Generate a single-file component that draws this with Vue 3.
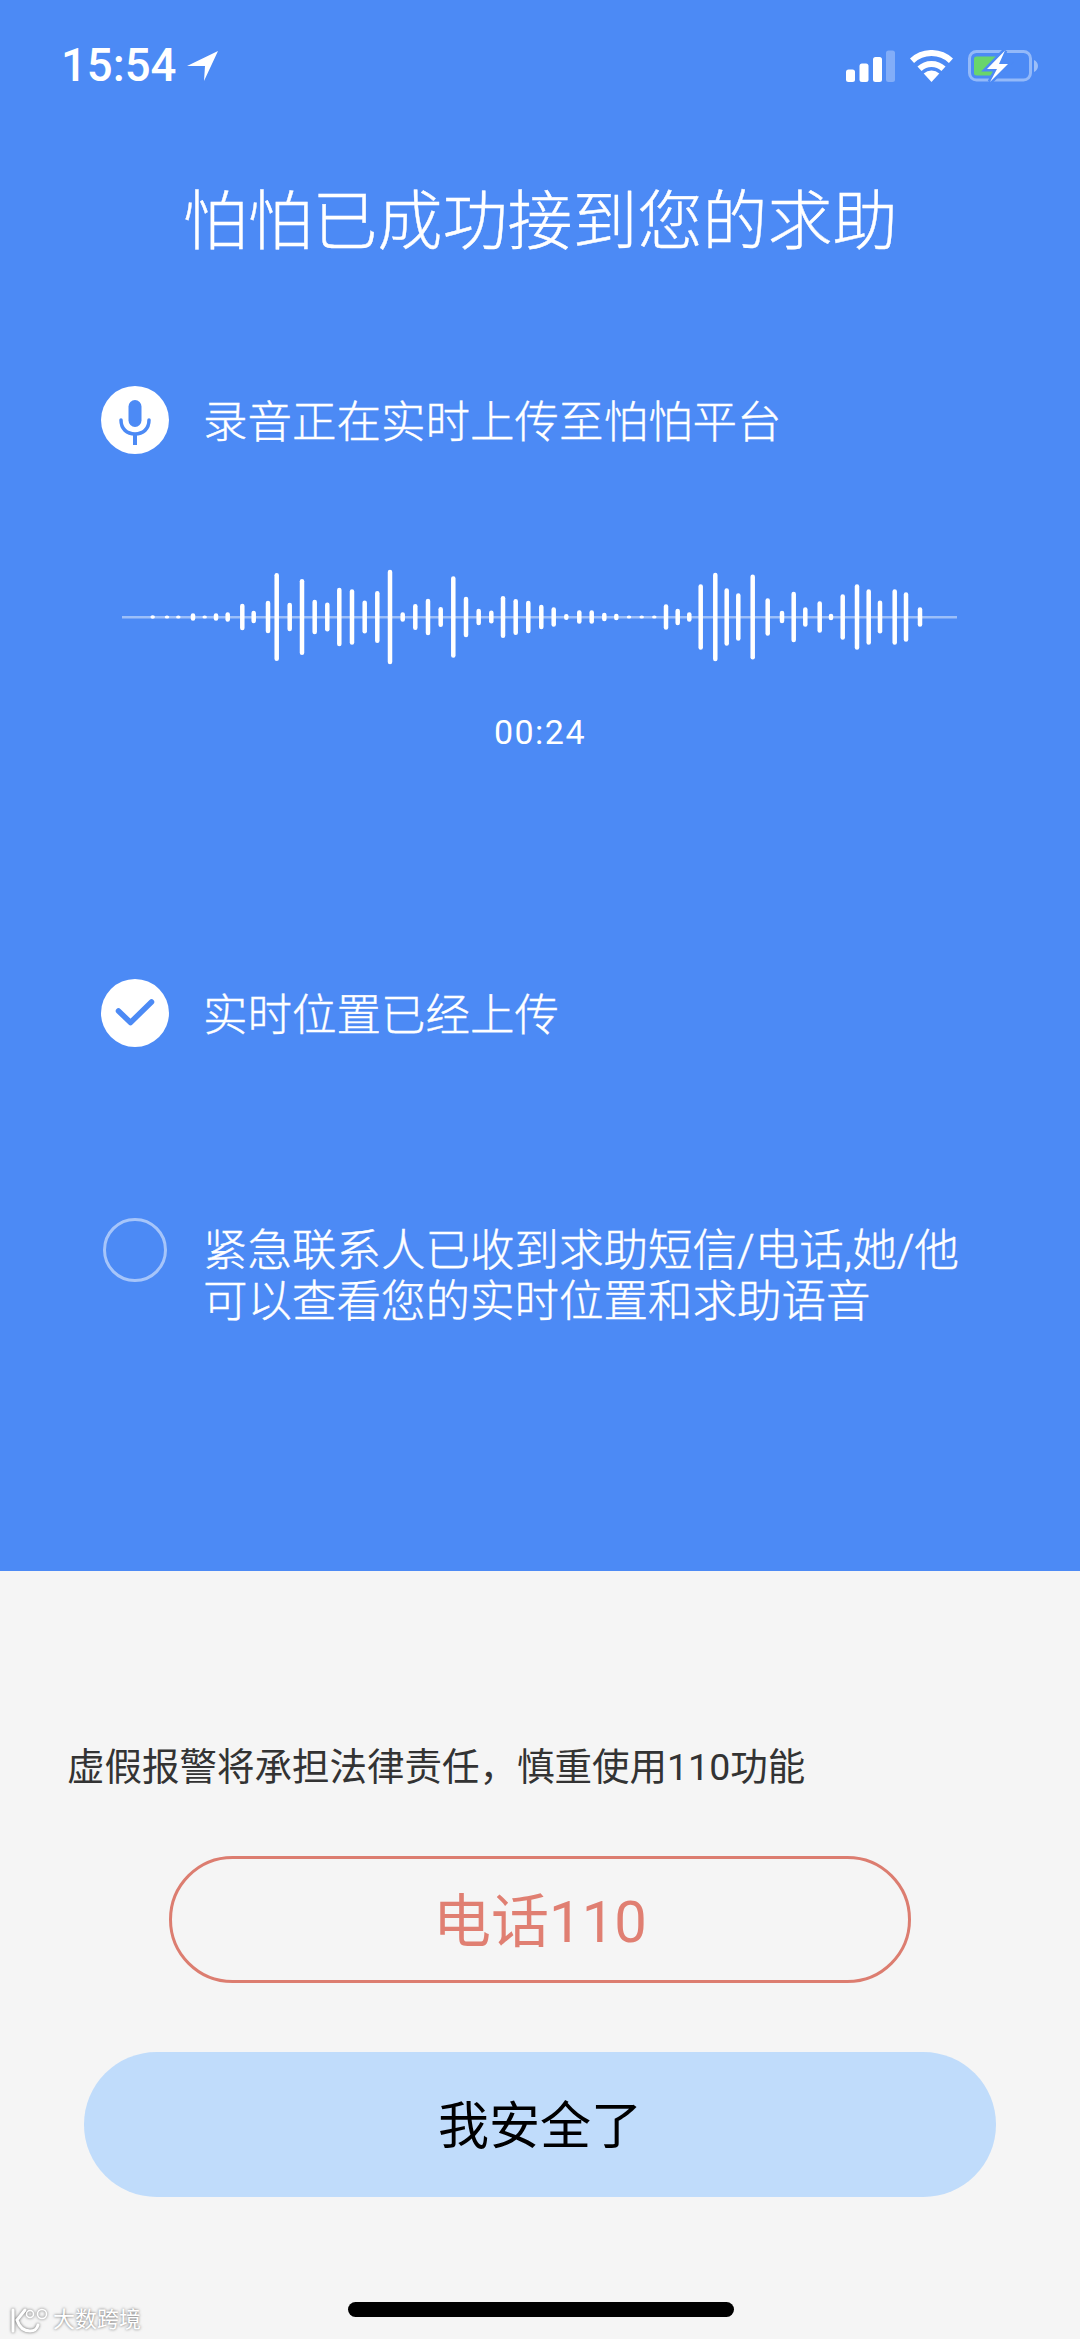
<template>
  <div class="screen">
    <section class="help">
      <div class="status-bar">
        <div class="status-left">
          <span class="time">15:54</span>
          <svg class="arrow" viewBox="0 0 31 31"><path d="M31 0 L17 30 L18 15 L0 15 Z" fill="#fff" /></svg>
        </div>
        <div class="status-right">
          <svg class="signal" viewBox="0 0 49 32">
            <rect x="0" y="19.500" width="9" height="12.500" rx="2.500" fill="#fff" />
            <rect x="13.500" y="13.500" width="9" height="18.500" rx="2.500" fill="#fff" />
            <rect x="27" y="7" width="9" height="25" rx="2.500" fill="#fff" />
            <rect x="40" y="0.500" width="9" height="31.500" rx="2.500" fill="#fff" fill-opacity="0.3" />
          </svg>
          <svg class="wifi" viewBox="0 0 43 32">
            <path d="M2 10.700 A28.500 28.500 0 0 1 41 10.700" fill="none" stroke="#fff" stroke-width="6" />
            <path d="M9.500 18.700 A17.500 17.500 0 0 1 33.500 18.700" fill="none" stroke="#fff" stroke-width="6" />
            <path d="M13.700 23.600 A11.500 11.500 0 0 1 29.300 23.600 L21.500 32 Z" fill="#fff" />
          </svg>
          <svg class="battery" viewBox="0 0 70 32">
            <rect x="1.500" y="1.500" width="61" height="28.500" rx="7" fill="none" stroke="#fff" stroke-opacity="0.4" stroke-width="3" />
            <rect x="6" y="6.500" width="24" height="19" rx="2.500" fill="#69d56b" />
            <path d="M66 10 C68.500 11 70 13.500 70 16 C70 18.500 68.500 21 66 22 Z" fill="#fff" fill-opacity="0.45" />
            <path d="M37 0.500 L19 19 L29 19 L22 32 L40 14 L31 14 Z" fill="#fff" stroke="#4c8af5" stroke-width="5" paint-order="stroke" />
          </svg>
        </div>
      </div>

      <h1 class="title">怕怕已成功接到您的求助</h1>

      <div class="row row-record">
        <span class="badge">
          <svg viewBox="0 0 68 68" class="badge-icon">
            <rect x="27.500" y="14" width="13" height="27" rx="6.500" fill="#4c8af5" />
            <path d="M20 34 C20 43 26 48 34 48 C42 48 48 43 48 34" fill="none" stroke="#4c8af5" stroke-width="3.500" stroke-linecap="round" />
            <rect x="32" y="48" width="4" height="11" fill="#4c8af5" />
          </svg>
        </span>
        <span class="row-text">录音正在实时上传至怕怕平台</span>
      </div>

      <svg class="wave" viewBox="0 0 1080 100">
        <rect x="122" y="49" width="835" height="2.500" fill="#fff" fill-opacity="0.45" />
        <rect
          v-for="bar in bars"
          :key="bar[0]"
          :x="bar[0] - 2.25"
          :y="50 - bar[1] / 2"
          width="4.500"
          :height="bar[1]"
          rx="2.250"
          fill="#fff"
        />
      </svg>

      <div class="timer">00:24</div>

      <div class="row row-location">
        <span class="badge">
          <svg viewBox="0 0 68 68" class="badge-icon">
            <path d="M17.500 32 L29.500 43.500 L50.500 23" fill="none" stroke="#4c8af5" stroke-width="5.500" stroke-linecap="round" stroke-linejoin="round" />
          </svg>
        </span>
        <span class="row-text">实时位置已经上传</span>
      </div>

      <div class="row row-contact">
        <span class="badge-empty"></span>
        <span class="row-text">紧急联系人已收到求助短信/电话,她/他<br />可以查看您的实时位置和求助语音</span>
      </div>
    </section>

    <section class="actions">
      <p class="notice">虚假报警将承担法律责任，慎重使用110功能</p>
      <button class="btn-call">电话110</button>
      <button class="btn-safe">我安全了</button>
      <div class="home-bar"></div>
    </section>

    <div class="watermark">
      <svg class="mark-logo" viewBox="0 0 38 26">
        <path d="M3 3 V24 M15 3 L7 13 C9 19 13 24 20 24 C24 24 27 22 28 18" fill="none" stroke="#fff" stroke-width="3" stroke-linecap="round" />
        <circle cx="20" cy="7" r="3.500" fill="none" stroke="#fff" stroke-width="1.500" />
        <circle cx="32" cy="7" r="4.500" fill="none" stroke="#fff" stroke-width="1.500" />
      </svg>
      <span>大数跨境</span>
    </div>
  </div>
</template>

<script setup>
// x centre and height of each waveform bar
const bars = [
  [152.7, 3.3], [167, 3], [178.3, 3], [193, 7.3], [204.7, 3], [216, 7.7], [227.7, 9.3],
  [242.3, 26.7], [253.7, 12.7], [268, 32.7], [276.7, 88], [289.7, 28.3], [302, 76],
  [314.7, 34.3], [327.3, 29], [339.3, 58.7], [352, 55.7], [364.7, 33], [377.3, 52],
  [390, 94.7], [402.7, 9.3], [415.3, 26], [428, 36.3], [440.7, 20], [453.3, 81.3],
  [466, 40.7], [478.7, 16.3], [491.3, 13], [503, 42], [515.7, 36], [528.3, 32.7],
  [541.3, 24.3], [553.7, 19.7], [566.3, 6], [579.3, 13.3], [591.7, 13.3], [604.3, 8.3],
  [616.3, 6.3], [629, 3], [641.7, 3], [654.3, 3], [666, 25.7], [677.7, 16.3], [689.3, 9.3],
  [700.7, 65.3], [715.3, 88.7], [726.7, 57.3], [738.3, 47.3], [752.7, 85], [767.7, 37.3],
  [782, 12.7], [793.7, 50.7], [805.3, 19.3], [819.7, 31.3], [831, 6.3], [842.7, 45.7],
  [857, 65.3], [868.7, 55.7], [880, 33], [894.7, 55.7], [906, 49.3], [920, 19.3]
];
</script>

<style>
html,
body {
  margin: 0;
  background: #f5f5f5;
}
</style>

<style scoped>
.screen {
  position: relative;
  width: 1080px;
  height: 2339px;
  display: flex;
  flex-direction: column;
  font-family: Roboto, "Noto Sans CJK SC", sans-serif;
  font-weight: 300;
  overflow: hidden;
}

.help {
  height: 1571px;
  background: #4c8af5;
  color: #fff;
  display: flex;
  flex-direction: column;
}

.status-bar {
  height: 32px;
  padding: 50px 42px 0 61px;
  display: flex;
  justify-content: space-between;
}

.status-left {
  display: flex;
  align-items: center;
  gap: 11px;
}

.time {
  font-family: Roboto, "Liberation Sans", sans-serif;
  font-size: 45.5px;
  font-weight: 500;
  line-height: 32px;
}

.arrow {
  width: 31px;
  height: 31px;
}

.status-right {
  display: flex;
  gap: 15px;
}

.signal {
  width: 49px;
  height: 32px;
}

.wifi {
  width: 43px;
  height: 32px;
}

.battery {
  width: 70px;
  height: 32px;
}

.title {
  margin: 95px 0 0;
  height: 90px;
  font-size: 65px;
  font-weight: 300;
  line-height: 90px;
  text-align: center;
  -webkit-text-stroke: 0.4px #fff;
}

.row {
  display: flex;
  align-items: center;
  padding-left: 101px;
  gap: 34px;
}

.row-record {
  margin-top: 119px;
}

.row-location {
  margin-top: 227px;
}

.row-contact {
  margin-top: 171px;
  align-items: flex-start;
}

.row-contact .row-text {
  padding-top: 8px;
}

.row-text {
  padding-top: 6px;
  font-size: 44.5px;
  line-height: 51px;
  -webkit-text-stroke: 0.4px #fff;
}

.badge {
  width: 68px;
  height: 68px;
  border-radius: 50%;
  background: #fff;
  flex-shrink: 0;
}

.badge-icon {
  display: block;
  width: 68px;
  height: 68px;
}

.badge-empty {
  width: 64px;
  height: 64px;
  margin: 0 2px;
  box-sizing: border-box;
  border: 3px solid rgba(255, 255, 255, 0.5);
  border-radius: 50%;
  flex-shrink: 0;
}

.wave {
  display: block;
  width: 1080px;
  height: 100px;
  margin-top: 113px;
}

.timer {
  margin-top: 45px;
  height: 40px;
  font-family: Roboto, "Liberation Sans", sans-serif;
  font-size: 34px;
  font-weight: 400;
  line-height: 40px;
  letter-spacing: 1.500px;
  text-align: center;
}

.actions {
  flex: 1;
  position: relative;
  background: #f5f5f5;
  display: flex;
  flex-direction: column;
  align-items: center;
}

.notice {
  align-self: flex-start;
  margin: 170px 0 0 67px;
  font-size: 37.5px;
  font-weight: 400;
  line-height: 52px;
  color: #333;
}

button {
  display: block;
  padding: 0 0 6px;
  font-family: inherit;
  font-weight: 400;
  box-sizing: border-box;
}

.btn-call {
  width: 742px;
  height: 127px;
  margin-top: 63px;
  background: transparent;
  border: 3px solid #dc7d70;
  border-radius: 64px;
  color: #e07f72;
  font-size: 58px;
}

.btn-safe {
  width: 912px;
  height: 145px;
  margin-top: 69px;
  background: #c0dcfb;
  border: none;
  border-radius: 73px;
  color: #000;
  font-size: 51px;
}

.home-bar {
  position: absolute;
  left: 348px;
  top: 731px;
  width: 386px;
  height: 15px;
  border-radius: 8px;
  background: #000;
}

.watermark {
  position: absolute;
  left: 10px;
  top: 2306px;
  display: flex;
  align-items: center;
  gap: 5px;
  color: #fff;
  font-size: 22px;
  font-weight: 400;
  line-height: 28px;
  text-shadow: 0 0 3px rgba(0, 0, 0, 0.6);
}

.mark-logo {
  width: 38px;
  height: 26px;
  filter: drop-shadow(0 0 1.500px rgba(0, 0, 0, 0.6));
}
</style>
